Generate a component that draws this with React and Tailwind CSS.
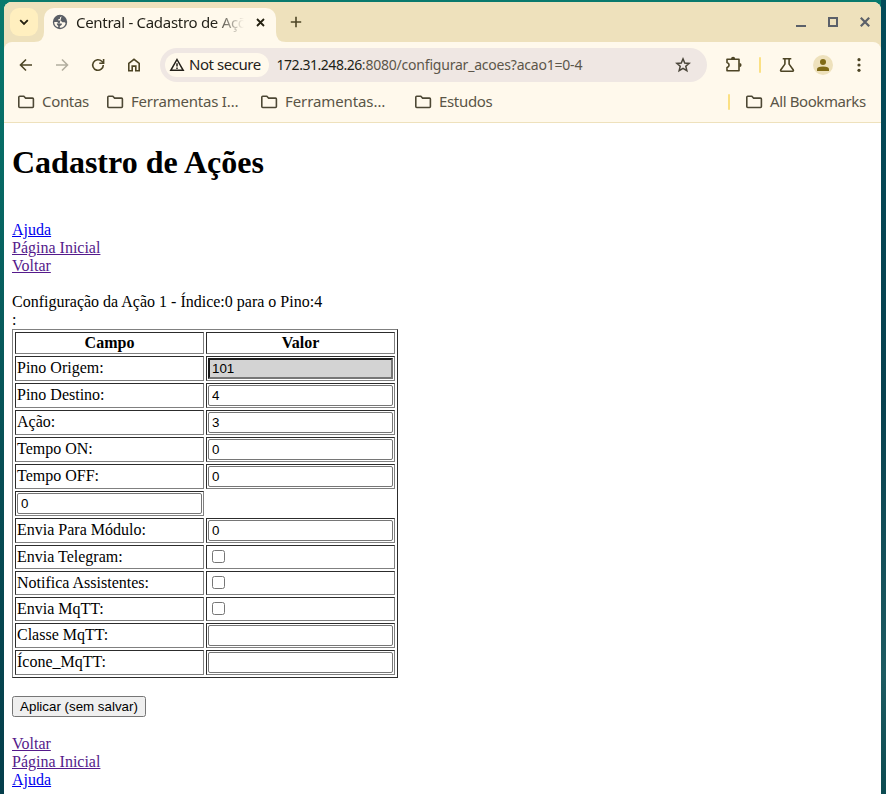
import React from 'react';

const UI = "font-['Noto_Sans',sans-serif]";

function Icon({ size = 20, className = '', children }) {
  return (
    <svg width={size} height={size} viewBox={`0 0 ${size} ${size}`} className={`shrink-0 ${className}`} fill="none" stroke="currentColor" strokeWidth="1.6">
      {children}
    </svg>
  );
}

function Folder() {
  return (
    <Icon size={18} className="text-[#4d4835]">
      <path d="M1.8 4.2q0-.9.9-.9h4.1l1.8 1.8h6.9q.9 0 .9.9v7.6q0 .9-.9.9H2.7q-.9 0-.9-.9z" />
    </Icon>
  );
}

function TabStrip() {
  return (
    <div className="relative flex h-10 shrink-0 bg-[#eee1bc]">
      <div className="ml-1.5 mt-1.5 flex h-7 w-7 items-center justify-center rounded-[9px] bg-[#ffefbf]">
        <svg width="10" height="7" viewBox="0 0 10 7" fill="none" stroke="#24200f" strokeWidth="1.8"><path d="M1.2 1.2 5 5 8.8 1.2" /></svg>
      </div>
      <div className="relative ml-1.5 mt-1.5 flex h-[34px] w-[232px] items-center rounded-t-[10px] bg-[#fff9ec] pb-1.5">
        <svg className="absolute -left-2.5 bottom-0" width="10" height="10" viewBox="0 0 10 10"><path d="M10 0v10H0Q10 10 10 0" fill="#fff9ec" /></svg>
        <svg className="absolute -right-2.5 bottom-0" width="10" height="10" viewBox="0 0 10 10"><path d="M0 0v10h10Q0 10 0 0" fill="#fff9ec" /></svg>
        <svg className="ml-2 shrink-0" width="16" height="16" viewBox="0 0 16 16">
          <circle cx="8" cy="8" r="7.2" fill="#5b5f66" />
          <path d="M9.600 2.200 8 3.400v1.300L6.300 5.300v1.300h2.300l1.700 1.700h2.400l.9.700A5.800 5.800 0 0 1 7.800 13.800v-1.500l2-1.500V9.500H6.900L5.200 7.900H2.200A5.900 5.900 0 0 0 5.500 13.200l1-.9-1.600-1.700V9.300L7.500 9.800" fill="#fff9ec" />
        </svg>
        <span className="ml-2 w-[168px] shrink-0 overflow-hidden whitespace-nowrap text-[15px] leading-5 tracking-[-0.29px] text-[#211f17] [mask-image:linear-gradient(to_right,black_138px,transparent_168px)]">Central - Cadastro de Ações</span>
        <svg className="ml-[11.500px] shrink-0" width="9" height="9" viewBox="0 0 9 9" stroke="#24200f" strokeWidth="1.8"><path d="m1 1 7 7M8 1 1 8" /></svg>
      </div>
      <svg className="ml-[14px] mt-[14px]" width="12" height="12" viewBox="0 0 12 12" stroke="#4d4525" strokeWidth="1.6"><path d="M6 .8v10.4M.8 6h10.4" /></svg>
      <div className="ml-auto mr-[11px] flex h-10 items-center text-[#5b6069]">
        <svg width="10" height="10" viewBox="0 0 10 10"><path d="M0 8h10v2H0z" fill="currentColor" /></svg>
        <svg className="ml-[22px]" width="10" height="10" viewBox="0 0 10 10"><path d="M1 1h8v8H1z" fill="none" stroke="currentColor" strokeWidth="2" /></svg>
        <svg className="ml-[22px]" width="10" height="10" viewBox="0 0 10 10"><path d="m.8.8 8.4 8.4M9.2.8.8 9.2" stroke="currentColor" strokeWidth="2.2" /></svg>
      </div>
    </div>
  );
}

function Toolbar() {
  return (
    <div className="flex h-[46px] shrink-0 items-center rounded-t-[8px] text-[#4d4525]">
      <Icon className="ml-3"><path d="M16 10H4.8M10 4.5 4.5 10l5.500 5.500" /></Icon>
      <Icon className="ml-4 text-[#b3ae9f]"><path d="M4 10h11.200M10 4.500 15.500 10 10 15.500" /></Icon>
      <Icon className="ml-4" size={20}>
        <path d="M15.300 10A5.300 5.300 0 1 1 13.800 6.300L15.600 8" />
        <path d="M15.600 4v4.300h-4.300" />
      </Icon>
      <Icon className="ml-4"><path d="M4.800 15.700V8.300L10 4.300l5.200 4v7.400h-3.400v-4.600H8.200v4.600z" /></Icon>
      <div className="ml-4 flex h-[34px] w-[547px] items-center rounded-full bg-[#efe7e3] pl-[5px]">
        <div className="flex h-6 w-[104px] items-center rounded-full bg-[#fff9ec] pl-1 text-[#24211a]">
          <svg width="16" height="16" viewBox="0 0 16 16" fill="none" stroke="currentColor" strokeWidth="1.5"><path d="M8 2.500 14.200 13.300H1.800z" /><path d="M8 6.200v3.300M8 10.500v1.500" /></svg>
          <span className="mb-0.5 ml-[4px] whitespace-nowrap text-[15px] leading-5 tracking-[-0.45px]">Not secure</span>
        </div>
        <span className="ml-[7.500px] whitespace-nowrap text-[14px] leading-5 tracking-[-0.21px] text-[#5c564a]"><span className="tracking-[-0.46px] text-[#211f17]">172.31.248.26</span>:8080/configurar_acoes?acao1=0-4</span>
        <svg className="ml-auto mr-4" width="16" height="16" viewBox="0 0 16 16" fill="none" stroke="#4b463a" strokeWidth="1.500"><path d="m8 1.900 1.750 4.100 4.450.4-3.400 2.900 1.050 4.400L8 11.300l-3.850 2.400L5.200 9.300 1.800 6.400l4.450-.4z" /></svg>
      </div>
      <Icon className="ml-[17px]" size={20}>
        <path d="M3 4.300h12v11.400H3v-3.100q2.100-.5 2.100-2.500T3 7.500z" strokeLinejoin="round" />
        <path d="M7 3.900a2.100 2.100 0 0 1 4.200 0zM15.500 8a2.100 2.100 0 0 1 0 4.200z" fill="currentColor" stroke="none" />
      </Icon>
      <div className="ml-[15px] h-4 w-0.5 rounded bg-[#fbe083]" />
      <Icon className="ml-4"><path d="M5.700 3.800h8.600M7.900 4v5.100L3.700 15q-.5 1.200.7 1.200h11.200q1.200 0 .7-1.200l-4.200-5.900V4" /></Icon>
      <div className="ml-4 flex h-5 w-5 items-center justify-center rounded-full bg-[#eee1bc]">
        <svg width="12" height="12" viewBox="0 0 12 12" fill="#806a16"><circle cx="6" cy="3" r="3" /><path d="M0 12V10.200Q0 7.500 6 7.500t6 2.700V12z" /></svg>
      </div>
      <svg className="ml-6" width="4" height="14" viewBox="0 0 4 14" fill="currentColor"><circle cx="2" cy="1.700" r="1.600" /><circle cx="2" cy="7" r="1.600" /><circle cx="2" cy="12.300" r="1.600" /></svg>
    </div>
  );
}

function Bookmarks() {
  return (
    <div className="flex h-[35px] shrink-0 items-start border-b border-[#eee1bc] text-[15px] leading-5 tracking-[-0.33px] text-[#5a5547]">
      <div className="flex h-6 w-[89px] items-center gap-[7px] whitespace-nowrap pl-[13px] pt-1"><Folder /><span className="mb-0.5">Contas</span></div>
      <div className="flex h-6 w-[154px] items-center gap-[7px] whitespace-nowrap pl-[13px] pt-1"><Folder /><span className="mb-0.5 tracking-[-0.22px]">Ferramentas I…</span></div>
      <div className="flex h-6 w-[154px] items-center gap-[7px] whitespace-nowrap pl-[13px] pt-1"><Folder /><span className="mb-0.5 tracking-[-0.1px]">Ferramentas…</span></div>
      <div className="flex h-6 items-center gap-[7px] whitespace-nowrap pl-[13px] pt-1"><Folder /><span className="mb-0.5">Estudos</span></div>
      <div className="ml-auto mr-[15px] flex h-6 items-center whitespace-nowrap pt-1">
        <div className="mr-[15px] h-4 w-0.5 rounded bg-[#fbe083]" />
        <Folder /><span className="mb-0.5 ml-[7px] w-[96px] tracking-[-0.4px]">All Bookmarks</span>
      </div>
    </div>
  );
}

const rows = [
  ['Pino Origem:', 'readonly', '101'],
  ['Pino Destino:', 'text', '4'],
  ['Ação:', 'text', '3'],
  ['Tempo ON:', 'text', '0'],
  ['Tempo OFF:', 'text', '0'],
  [null, 'text', '0'],
  ['Envia Para Módulo:', 'text', '0'],
  ['Envia Telegram:', 'check'],
  ['Notifica Assistentes:', 'check'],
  ['Envia MqTT:', 'check'],
  ['Classe MqTT:', 'text', ''],
  ['Ícone_MqTT:', 'text', ''],
];

const cell = 'border border-t-[#2c2c2c] border-l-[#2c2c2c] border-r-[#808080] border-b-[#808080] p-px w-[189px]';

function Field({ kind, value }) {
  if (kind === 'check') {
    return <input type="checkbox" className="ml-[3px] mt-[3px] block h-[13px] w-[13px] translate-x-px appearance-none rounded-[2.5px] border border-[#767676] bg-white" />;
  }
  if (kind === 'readonly') {
    return <input readOnly defaultValue={value} className="block h-[21px] w-[185px] border-2 border-t-[#1c1c1c] border-l-[#1c1c1c] border-r-[#767676] border-b-[#767676] bg-[#d3d3d3] px-0.5 font-['Liberation_Sans',sans-serif] text-[13.333px] leading-[15px]" />;
  }
  return <input defaultValue={value} className="block h-[21px] w-[185px] rounded-[2px] border border-[#767676] bg-white px-[3px] font-['Liberation_Sans',sans-serif] text-[13.333px] leading-[15px]" />;
}

function Table() {
  return (
    <div className="flex w-[386px] flex-col gap-0.5 border border-b-[#2c2c2c] border-l-[#808080] border-r-[#2c2c2c] border-t-[#808080] p-0.5">
      <div className="flex h-[22px] gap-0.5 text-center font-bold">
        <div className={cell}>Campo</div>
        <div className={cell}>Valor</div>
      </div>
      {rows.map(([label, kind, value], i) => (
        <div key={i} className={`flex gap-0.5 ${kind === 'check' ? 'h-6' : 'h-[25px]'}`}>
          {label && <div className={`${cell} pt-0.5`}>{label}</div>}
          <div className={cell}><Field kind={kind} value={value} /></div>
        </div>
      ))}
    </div>
  );
}

const visited = 'text-[#551a8b] underline self-start';
const link = 'text-[#0000ee] underline self-start';

export default function App() {
  return (
    <div className="h-[794px] w-[886px] overflow-hidden bg-[linear-gradient(to_bottom,#08796d,#074e55_60%,#053e4b)]">
      <div className="h-full bg-[linear-gradient(to_bottom,#034b59,#07414f_50%,#1d5b62_85%,#0c4b51)] bg-[length:5px_100%] bg-right bg-no-repeat pl-1 pr-[5px] pt-0.5">
        <div className="flex h-[792px] flex-col overflow-hidden rounded-t-[8px] bg-white">
          <div className={`${UI} flex shrink-0 flex-col bg-[#eee1bc]`}>
            <TabStrip />
            <div className="rounded-t-[8px] bg-[#fff9ec]">
              <Toolbar />
              <Bookmarks />
            </div>
          </div>
          <div className="flex flex-col px-2 font-['Liberation_Serif',serif] text-[16px] leading-[18px] text-black">
            <h1 className="mt-[21px] text-[32px] font-bold leading-[37px]">Cadastro de Ações</h1>
            <a className={`${link} mt-[40px]`}>Ajuda</a>
            <a className={visited}>Página Inicial</a>
            <a className={visited}>Voltar</a>
            <p className="mt-[18px]">Configuração da Ação 1 - Índice:0 para o Pino:4</p>
            <p>:</p>
            <Table />
            <button className="mt-[18px] h-[21px] w-[134px] self-start whitespace-nowrap rounded-[2.5px] border border-[#767676] bg-[#efefef] text-center font-['Liberation_Sans',sans-serif] text-[13.333px] leading-[19px]">Aplicar (sem salvar)</button>
            <a className={`${visited} mt-[18px]`}>Voltar</a>
            <a className={visited}>Página Inicial</a>
            <a className={link}>Ajuda</a>
          </div>
        </div>
      </div>
    </div>
  );
}
